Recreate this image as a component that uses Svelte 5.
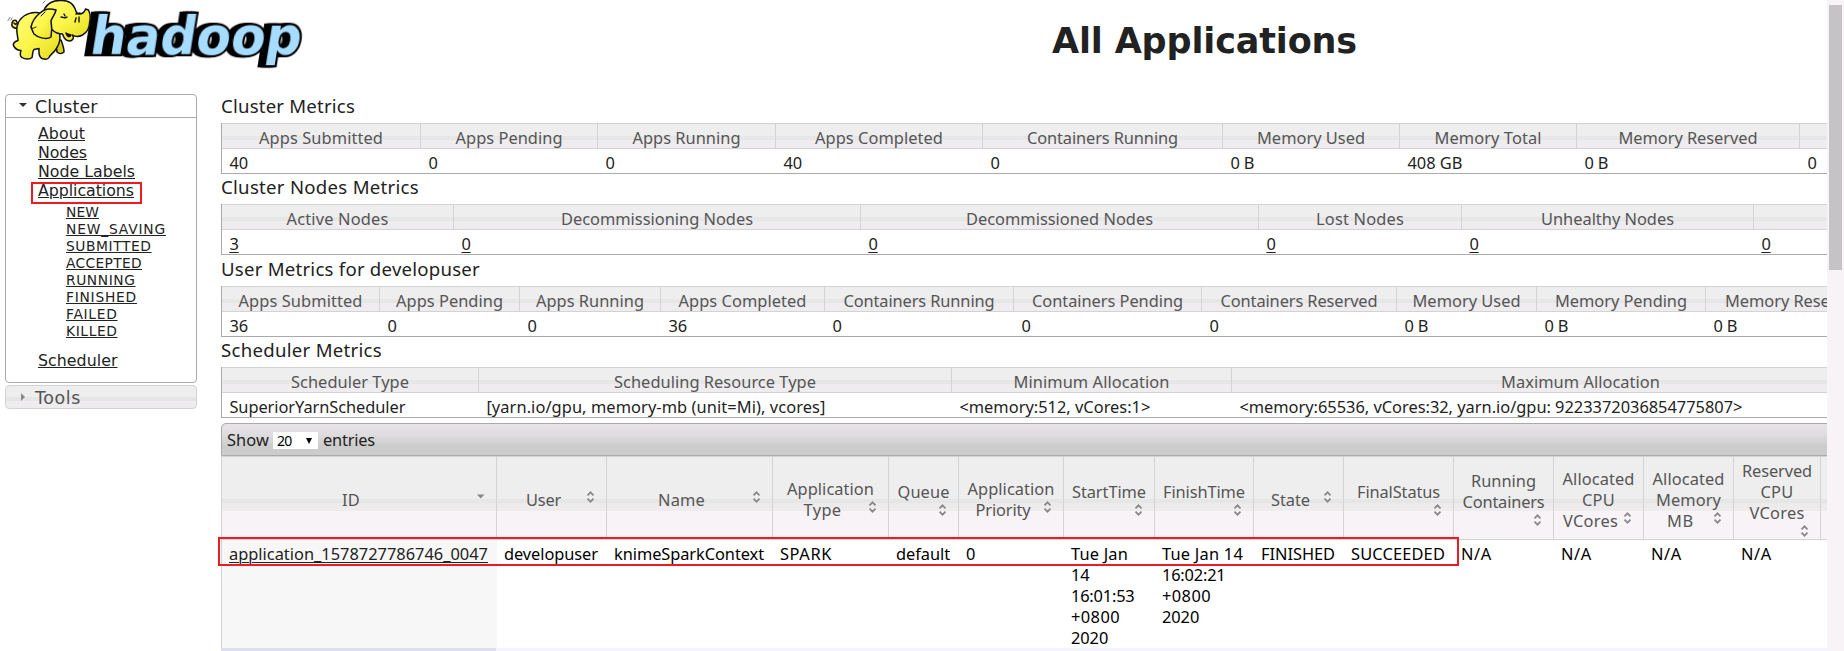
<script>
  // Spreads a label's letters so that it takes the given advance width.
  function fit(node, width) {
    const apply = (w) => {
      if (!w) return;
      node.style.letterSpacing = '0px';
      const natural = node.getBoundingClientRect().width;
      node.style.letterSpacing = (w - natural) / node.textContent.length + 'px';
    };
    apply(width);
    return { update: apply };
  }

  const metrics = [
    {
      title: ['Cluster Metrics', 134],
      cols: [199, 177, 178, 207, 240, 177, 177, 223, 237],
      heads: [['Apps Submitted', 124], ['Apps Pending', 107], ['Apps Running', 108], ['Apps Completed', 128], ['Containers Running', 151], ['Memory Used', 108], ['Memory Total', 107], ['Memory Reserved', 139], ['', 0]],
      cells: [['40', 18.6], ['0', 9.3], ['0', 9.3], ['40', 18.6], ['0', 9.3], ['0 B', 24], ['408 GB', 55], ['0 B', 24], ['0', 9.3]]
    },
    {
      title: ['Cluster Nodes Metrics', 198],
      cols: [232, 407, 398, 203, 292, 220],
      heads: [['Active Nodes', 102], ['Decommissioning Nodes', 192], ['Decommissioned Nodes', 187], ['Lost Nodes', 88], ['Unhealthy Nodes', 133], ['', 0]],
      cells: [['3', 9.3], ['0', 9.3], ['0', 9.3], ['0', 9.3], ['0', 9.3], ['0', 9.3]],
      links: true
    },
    {
      title: ['User Metrics for developuser', 259],
      cols: [158, 140, 141, 164, 189, 188, 195, 140, 169, 178],
      heads: [['Apps Submitted', 124], ['Apps Pending', 107], ['Apps Running', 108], ['Apps Completed', 128], ['Containers Running', 151], ['Containers Pending', 151], ['Containers Reserved', 157], ['Memory Used', 108], ['Memory Pending', 132], ['Memory Reserved', 139]],
      cells: [['36', 18.6], ['0', 9.3], ['0', 9.3], ['36', 18.6], ['0', 9.3], ['0', 9.3], ['0', 9.3], ['0 B', 24], ['0 B', 24], ['0 B', 24]]
    },
    {
      title: ['Scheduler Metrics', 161],
      cols: [257, 473, 280, 698],
      heads: [['Scheduler Type', 118], ['Scheduling Resource Type', 202], ['Minimum Allocation', 156], ['Maximum Allocation', 159]],
      cells: [['SuperiorYarnScheduler', 176], ['[yarn.io/gpu, memory-mb (unit=Mi), vcores]', 339], ['<memory:512, vCores:1>', 191], ['<memory:65536, vCores:32, yarn.io/gpu: 9223372036854775807>', 503]]
    }
  ];

  const apps = [
    { w: 275, head: [['ID', 18]], icon: 'desc', cell: [['application_1578727786746_0047', 259]], link: true },
    { w: 110, head: [['User', 35]], cell: [['developuser', 94]] },
    { w: 166, head: [['Name', 47]], cell: [['knimeSparkContext', 150]] },
    { w: 116, head: [['Application', 87], ['Type', 38]], cell: [['SPARK', 52]] },
    { w: 70, head: [['Queue', 52]], below: true, cell: [['default', 54]] },
    { w: 105, head: [['Application', 87], ['Priority', 55]], cell: [['0', 9.3]] },
    { w: 91, head: [['StartTime', 74]], below: true, cell: [['Tue Jan', 57], ['14', 18.6], ['16:01:53', 63.5], ['+0800', 49], ['2020', 37.2]] },
    { w: 99, head: [['FinishTime', 82]], below: true, cell: [['Tue Jan 14', 81], ['16:02:21', 63.5], ['+0800', 49], ['2020', 37.2]] },
    { w: 90, head: [['State', 39]], cell: [['FINISHED', 74]] },
    { w: 110, head: [['FinalStatus', 83]], below: true, cell: [['SUCCEEDED', 94]] },
    { w: 100, head: [['Running', 65], ['Containers', 82]], below: true, cell: [['N/A', 31]] },
    { w: 90, head: [['Allocated', 72], ['CPU', 33], ['VCores', 55]], cell: [['N/A', 31]] },
    { w: 90, head: [['Allocated', 72], ['Memory', 65], ['MB', 27]], cell: [['N/A', 31]] },
    { w: 87, head: [['Reserved', 70], ['CPU', 33], ['VCores', 55]], below: true, cell: [['N/A', 31]] },
    { w: 90, head: [['', 0]], cell: [['', 0]], icon: 'none' }
  ];

  const pages = [['About', 47], ['Nodes', 49], ['Node Labels', 97], ['Applications', 96]];
  const states = [['NEW', 33], ['NEW_SAVING', 100], ['SUBMITTED', 85.5], ['ACCEPTED', 76], ['RUNNING', 69.5], ['FINISHED', 71], ['FAILED', 51.5], ['KILLED', 51.5]];
</script>

{#snippet sorter(kind)}
  <svg class="sort" width="16" height="16" viewBox="0 0 16 16">
    {#if kind === 'desc'}
      <path d="M4 5.5h7.5L7.7 9.5z" fill="#888" />
    {:else if kind !== 'none'}
      <path d="M4.5 6.3 7.5 3.3l3 3M4.5 9.7l3 3 3-3" fill="none" stroke="#888" stroke-width="1.7" />
    {/if}
  </svg>
{/snippet}

<div class="page">
  <header>
    <svg class="logo" width="320" height="76" viewBox="0 0 320 76">
      <defs>
        <linearGradient id="hide" x1="0" y1="0" x2="1" y2="1">
          <stop offset="0" stop-color="#fffb7a" />
          <stop offset="0.5" stop-color="#fbf64a" />
          <stop offset="1" stop-color="#e3d81c" />
        </linearGradient>
      </defs>
      <g class="word" transform="skewX(-9)">
        <text x="97" y="54.5" textLength="211" lengthAdjust="spacingAndGlyphs">hadoop</text>
      </g>
      <g stroke="#111" stroke-width="1.5" stroke-linejoin="round" stroke-linecap="round">
        <path d="M19 28c-4 1-8-1-7-4 0-4 4-5 5-2 1 2-2 3-3 1" fill="url(#hide)" />
        <path d="M10 17.500l-2 3M12 18l-1 2M45 1l-2 2" fill="none" stroke-width=".8" stroke="#555" />
        <path d="M54 40c1 5 3 9 3 12 2 2 5 2 7 0 0-4-1-7-3-12z" fill="#d9ce1a" />
        <path d="M37 12.500c-9-1-18 5-20 14-1 6 1 10 1 14-3 1-6 3-4 6 2 3 4 4 7 4-1 3-1 6 1 7 3 2 8 2 10 0 1-3 0-6 2-8l5-1c0 4-1 8 3 10 3 1 6 1 7-1 1-3 4-4 6-7 3-4 5-8 5-13l-2-19z" fill="url(#hide)" />
        <path d="M45 8c4-6 11-8 17-7.500 6 0 11 3 13 8 1 4 3 6 5 5.500 3-.5 5-3 5.500-5l3 1c2 4 2 9 1 13 0 5-2 9-7 12-4 2-7 2-10 0 2 3 0 6-3 6-4 0-6-4-7-7-4 0-7-1-10-4l-12-10z" fill="url(#hide)" />
        <path d="M56 10c-6-2-12-1-16 3-5 4-8 9-9 14 1 3 2 5 3 7 4 4 13 6 17 3 1-6 1-11 0-16 1-4 4-6 5-11z" fill="url(#hide)" />
        <path d="M41 16l4-4M36 27c-2 1-4 2-5 1" fill="none" stroke-width="1" />
        <path d="M66 33c1 3 3 5 5 2-1-1-3 0-5-2z" fill="#111" />
        <path d="M61 17c3 0 4 2 6 0M64 14l1 2M76 18l-1 4M79 17v5M76 14l4-1" fill="none" stroke-width="1.4" />
      </g>
    </svg>
    <h1><span use:fit={305}>All Applications</span></h1>
  </header>

  <div class="body">
    <nav>
      <section class="open">
        <h3><i class="down"></i><span use:fit={62.5}>Cluster</span></h3>
        <ul class="pages">
          {#each pages as [label, w]}
            <li class:marked={label === 'Applications'}><a href="#top" use:fit={w}>{label}</a></li>
          {/each}
        </ul>
        <ul class="states">
          {#each states as [label, w]}
            <li><a href="#top" use:fit={w}>{label}</a></li>
          {/each}
        </ul>
        <ul class="pages last"><li><a href="#top" use:fit={79.5}>Scheduler</a></li></ul>
      </section>
      <h3 class="closed"><i class="side"></i><span use:fit={46}>Tools</span></h3>
    </nav>

    <main>
      {#each metrics as m}
        <h2><span use:fit={m.title[1]}>{m.title[0]}</span></h2>
        <div class="grid" style:grid-template-columns={m.cols.map((c) => c + 'px').join(' ')}>
          {#each m.heads as [label, w]}
            <div class="th"><span use:fit={w}>{label}</span></div>
          {/each}
          {#each m.cells as [label, w]}
            <div class="td"><span class:link={m.links} use:fit={w}>{label}</span></div>
          {/each}
        </div>
      {/each}

      <div class="toolbar">
        <span use:fit={42}>Show</span>
        <div class="select"><span>20</span><i></i></div>
        <span use:fit={52}>entries</span>
      </div>

      <div class="apps" style:grid-template-columns={apps.map((c) => c.w + 'px').join(' ')}>
        {#each apps as c}
          <div class="ah">
            {#each c.head as [label, w], i}
              <div class="line">
                <b><span use:fit={w}>{label}</span></b>
                {#if !c.below && i === c.head.length - 1}{@render sorter(c.icon)}{/if}
              </div>
            {/each}
            {#if c.below}<div class="under">{@render sorter('both')}</div>{/if}
          </div>
        {/each}
        {#each apps as c}
          <div class="ad" class:sorted={c.link}>
            {#each c.cell as [label, w]}
              <div><span class:link={c.link} use:fit={w}>{label}</span></div>
            {/each}
          </div>
        {/each}
        <div class="row-mark"></div>
      </div>
      <div class="next"></div>
    </main>
  </div>
  <div class="scrollbar"><div></div></div>
</div>

<style>
  :global(body) { background: #fff; overflow: hidden; }
  .page {
    position: relative; box-sizing: border-box; width: 1844px; height: 651px; overflow: hidden;
    color: #222; font: 16.4px/21px 'Noto Sans', 'Open Sans', sans-serif; white-space: nowrap;
  }
  h1, h2, h3, ul { margin: 0; padding: 0; font-weight: 400; }
  li { list-style: none; }
  a, .link { color: #222; text-decoration: underline; text-underline-offset: 2px; text-decoration-thickness: 1px; }
  span { display: inline-block; }
  header { display: flex; height: 94px; }
  .logo { flex: none; }
  .word { font: 700 52px 'DejaVu Sans', sans-serif; fill: #a6dcff; stroke: #000; stroke-width: 4.5px; paint-order: stroke; filter: drop-shadow(-2.5px .5px 0 #000) drop-shadow(-2.5px .5px 0 #000); }
  h1 { margin-left: 732px; padding-top: 21px; font: 700 35px/40px 'DejaVu Sans', sans-serif; }
  .body { display: flex; }
  nav { flex: none; box-sizing: border-box; width: 197px; padding-left: 5px; margin-right: 24px; font-family: 'DejaVu Sans', sans-serif; }
  .open { box-sizing: border-box; height: 289px; border: 1px solid #aaa; border-radius: 4px; }
  h3 { display: flex; align-items: center; height: 22px; font-size: 17.4px; line-height: 22px; }
  h3 span { padding-top: 2px; }
  .open h3 { border-bottom: 1px solid #aaa; }
  h3 i { box-sizing: border-box; width: 29px; height: 8px; padding-left: 13px; }
  h3 i::before { content: ''; display: block; width: 0; height: 0; border: 4px solid transparent; }
  .down::before { margin-top: 1px; border-top-color: #333; border-bottom: 0; }
  .side::before { margin-left: 2px; border-left-color: #888; border-right: 0; }
  .closed { box-sizing: border-box; height: 24px; margin-top: 2px; border: 1px solid #d3d3d3; border-radius: 4px; color: #555; background: linear-gradient(#eee 50%, #e5e6e6 50%, #e6e5e6 68%, #eeecee 68%); }
  .pages { padding: 6px 0 0 32px; font-size: 15.8px; }
  .pages li { height: 19px; line-height: 19px; }
  .states { padding: 4px 0 0 60px; font-size: 13.8px; }
  .states li { height: 17.07px; line-height: 17px; }
  .last { padding-top: 10px; }
  a { display: inline-block; text-underline-offset: 1px; }
  .marked { position: relative; }
  .marked::after { content: ''; position: absolute; left: -7px; top: 1px; width: 107px; height: 18px; border: 2px solid #ed1c24; }
  main { flex: none; width: 1606px; padding-left: 4px; margin-left: -4px; overflow: hidden; }
  h2 { height: 29px; font-size: 18.6px; line-height: 23px; }
  h2 + .grid { margin-bottom: 1.4px; }
  .grid { display: grid; grid-template-rows: 25px 26px; width: max-content; border-left: 1px solid #aaa; box-sizing: border-box; }
  .th { box-sizing: border-box; height: 26px; border: 1px solid #d3d3d3; border-left: 0; color: #555; text-align: center; line-height: 27px; background: linear-gradient(#eee 49%, #e6e7e7 49%, #e6e6e6 66%, #eeecee 66%); }
  .td { box-sizing: border-box; padding: 2px 0 0 7.4px; border-bottom: 1px solid #aaa; line-height: 25px; }
  .toolbar { display: flex; align-items: center; box-sizing: border-box; height: 33px; width: 1800px; margin-top: 5px; padding: 1px 0 1px 5px; border: 1px solid #aaa; border-radius: 5px 0 0; background: linear-gradient(#e8e3e6, #dedcde 35%, #d2d2d2 60%, #ccc 70%); }
  .select { display: flex; align-items: center; width: 45px; height: 17px; margin: 2px 5px 0 4px; background: #fff; color: #000; font-size: 14px; }
  .select span { width: 33px; padding-left: 4px; box-sizing: border-box; letter-spacing: -.7px; }
  .select i { border: 3.3px solid transparent; border-top: 6px solid #000; border-bottom: 0; }
  .apps { position: relative; display: grid; grid-template-rows: 84px 108px; width: max-content; border-left: 1px solid #d3d3d3; box-sizing: border-box; }
  .ah { display: flex; flex-direction: column; justify-content: center; box-sizing: border-box; padding: 2px 7px 0 7px; border: 1px solid #d3d3d3; border-left: 0; color: #555; background: linear-gradient(#eee 42px, #e5e7e6 42px, #e5e6e6 46px, #eeeaec 46px, #eeecee 54px, #f7f3f7 54px); }
  .line { display: flex; height: 21px; }
  .line b { display: flex; flex: 1; justify-content: center; font-weight: 400; min-width: 0; }
  .sort { display: block; flex: none; }
  .under { display: flex; justify-content: flex-end; height: 16px; }
  .ad { padding: 3px 0 0 7px; color: #000; line-height: 21px; }
  .ad > div { height: 21px; }
  .sorted { background: #f7f7f7; }
  .row-mark { position: absolute; left: -4px; top: 81px; width: 1237px; height: 25px; border: 2px solid #ed1c24; }
  .next { height: 5px; background: linear-gradient(90deg, #dddfee 275px, #f5f3ff 275px); }
  .scrollbar { position: absolute; top: 0; right: 0; box-sizing: border-box; width: 17px; height: 651px; padding: 5px 2px 0; background: #f7f3f7; }
  .scrollbar div { height: 265px; background: #c5c3c6; }
</style>
